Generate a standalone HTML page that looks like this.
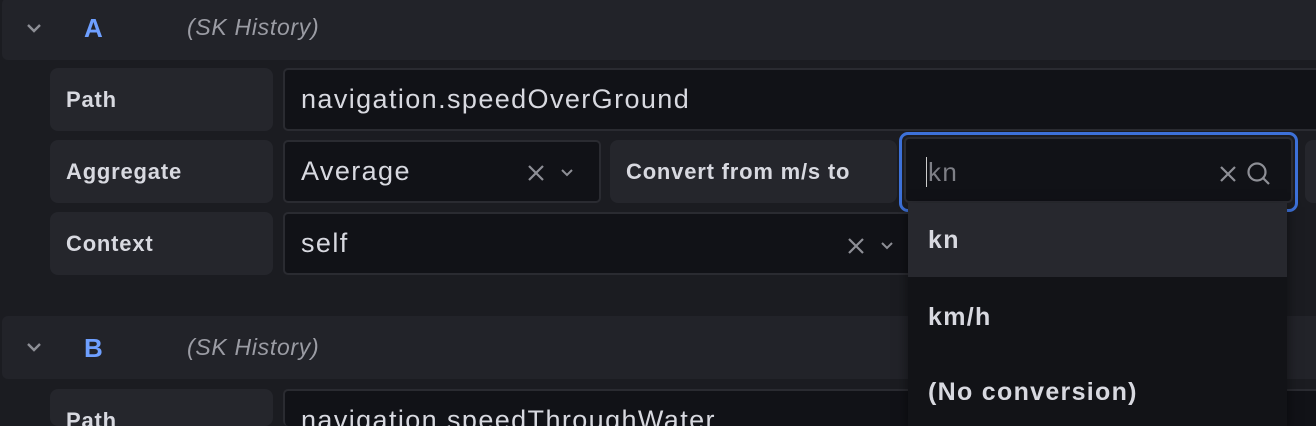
<!DOCTYPE html>
<html><head><meta charset="utf-8"><style>
*{box-sizing:border-box;margin:0;padding:0}
html{width:1316px;height:426px;overflow:hidden;background:#1b1c21}
body{width:1316px;height:426px;overflow:hidden;background:#1b1c21;font-family:"Liberation Sans",sans-serif;position:relative}
.a{position:absolute}
.hdr{left:2px;width:1330px;height:60px;background:#222329;border-radius:6px}
.chev{left:26px;width:16px;height:10px}
.ltr{color:#6e9fff;font-size:26px;font-weight:bold}
.sk{color:#9b9ca4;font-style:italic;font-size:23px;letter-spacing:.7px}
.lbl{background:#25262c;border-radius:8px;color:#d8d9e0;font-size:22px;font-weight:bold;letter-spacing:.8px;padding-left:16px;line-height:63px;height:63px}
.inp{background:#111217;border:2px solid #2a2b31;border-radius:5px;color:#d8d9e0;font-size:27px;letter-spacing:1.4px;padding-left:16px;line-height:59px;height:63px;white-space:nowrap;overflow:hidden}
.opt{left:908px;width:379px;height:76px;color:#d8d9e0;font-size:25px;font-weight:bold;letter-spacing:1.3px;padding-left:20px;line-height:76px}
</style></head><body>
<div class="a hdr" style="top:-2px;height:62px"></div>
<svg class="a chev" style="top:23px" viewBox="0 0 16 10"><path d="M2 2 L8 8 L14 2" stroke="#8e8f96" stroke-width="2.4" fill="none"/></svg>
<div class="a ltr" style="left:84px;top:13px">A</div>
<div class="a sk" style="left:187px;top:14px">(SK History)</div>

<div class="a lbl" style="left:50px;top:68px;width:223px">Path</div>
<div class="a inp" style="left:283px;top:68px;width:1040px">navigation.speedOverGround</div>

<div class="a lbl" style="left:50px;top:140px;width:223px">Aggregate</div>
<div class="a inp" style="left:283px;top:140px;width:318px">Average</div>
<svg class="a" style="left:527px;top:164px" width="18" height="18" viewBox="0 0 18 18"><path d="M2 2L16 16M16 2L2 16" stroke="#8e8f96" stroke-width="2.2"/></svg>
<svg class="a" style="left:560px;top:168px" width="14" height="10" viewBox="0 0 14 10"><path d="M2 2L7 7L12 2" stroke="#8e8f96" stroke-width="2" fill="none"/></svg>
<div class="a lbl" style="left:610px;top:140px;width:287px">Convert from m/s to</div>
<div class="a" style="left:1305px;top:140px;width:20px;height:63px;background:#25262c;border-radius:8px"></div>
<div class="a" style="left:899px;top:132px;width:399px;height:80px;border:3px solid #3d71d9;border-radius:9px"></div>
<div class="a inp" style="left:904px;top:137px;width:389px;height:66px;line-height:66px;color:#7e7f86;font-size:26px;padding-left:20px"><span style="border-left:1.5px solid #ccc;margin-right:1px"></span>kn</div>
<svg class="a" style="left:1219px;top:165px" width="18" height="18" viewBox="0 0 18 18"><path d="M2 2L16 16M16 2L2 16" stroke="#8e8f96" stroke-width="2.2"/></svg>
<svg class="a" style="left:1246px;top:161px" width="26" height="26" viewBox="0 0 26 26"><circle cx="11" cy="11" r="8.5" stroke="#8e8f96" stroke-width="2.2" fill="none"/><path d="M17 17L23 23" stroke="#8e8f96" stroke-width="2.2"/></svg>

<div class="a lbl" style="left:50px;top:212px;width:223px">Context</div>
<div class="a inp" style="left:283px;top:212px;width:640px">self</div>
<svg class="a" style="left:847px;top:237px" width="18" height="18" viewBox="0 0 18 18"><path d="M2 2L16 16M16 2L2 16" stroke="#8e8f96" stroke-width="2.2"/></svg>
<svg class="a" style="left:880px;top:241px" width="14" height="10" viewBox="0 0 14 10"><path d="M2 2L7 7L12 2" stroke="#8e8f96" stroke-width="2" fill="none"/></svg>

<div class="a hdr" style="top:316px;height:63px"></div>
<svg class="a chev" style="left:26px;top:342px" width="16" height="10" viewBox="0 0 16 10"><path d="M2 2 L8 8 L14 2" stroke="#8e8f96" stroke-width="2.4" fill="none"/></svg>
<div class="a ltr" style="left:84px;top:333px">B</div>
<div class="a sk" style="left:187px;top:334px">(SK History)</div>
<div class="a lbl" style="left:50px;top:389px;width:223px;height:37px">Path</div>
<div class="a inp" style="left:283px;top:389px;width:1040px;height:37px;border-bottom:none">navigation.speedThroughWater</div>

<div class="a" style="left:908px;top:203px;width:379px;height:223px;background:#121317;box-shadow:0 4px 12px rgba(0,0,0,.5)"></div>
<div class="a opt" style="top:203px;height:74px;line-height:74px;background:#27282e">kn</div>
<div class="a opt" style="top:279px">km/h</div>
<div class="a opt" style="top:354px;height:72px">(No conversion)</div>
</body></html>
